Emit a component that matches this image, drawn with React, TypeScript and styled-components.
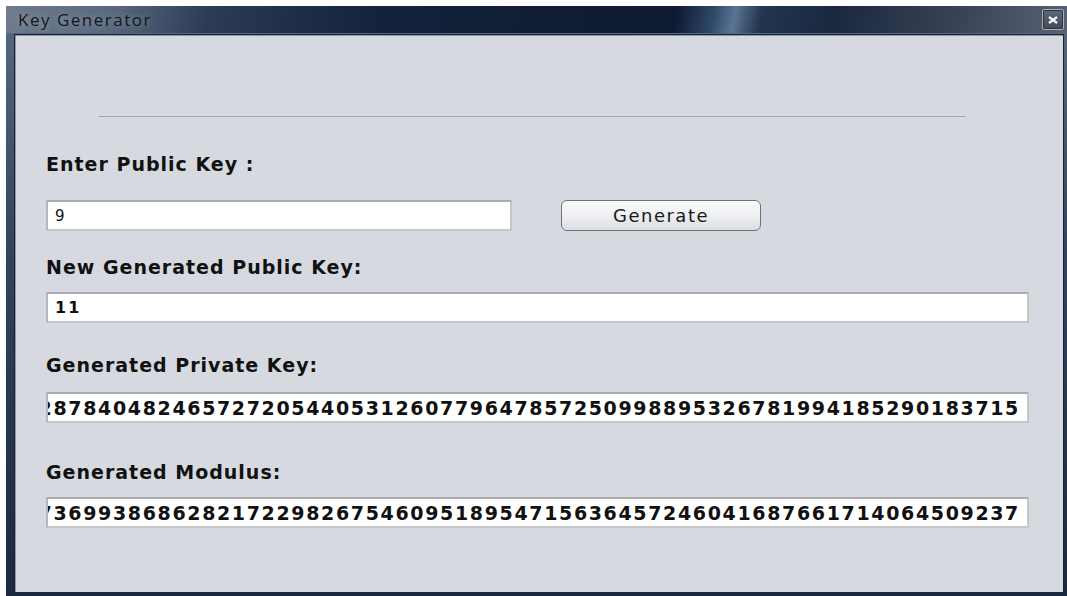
import { FunctionComponent } from "react"
import styled, { createGlobalStyle } from "styled-components"

const GlobalStyle = createGlobalStyle`
  html, body {
    margin: 0;
    padding: 0;
    background: #ffffff;
  }
  #root {
    width: 1067px;
    height: 596px;
    overflow: hidden;
  }
`

const StyledWindow = styled.div`
  box-sizing: border-box;
  width: 1061px;
  height: 590px;
  margin: 6px 0 0 6px;
  display: flex;
  flex-direction: column;
  background: linear-gradient(180deg, #5a6a80 0%, #34445e 40%, #1a2840 100%);
`

const StyledTitleBar = styled.div`
  height: 27px;
  flex: none;
  display: flex;
  align-items: center;
  justify-content: space-between;
  padding: 0 3px 0 12px;
  background: linear-gradient(
    100deg,
    #6e7c8e 0%,
    #5a697e 10%,
    #2c3c56 19%,
    #14223b 35%,
    #0d1a31 63%,
    #2f4868 66.5%,
    #5a7594 68.5%,
    #23354f 71%,
    #1a283f 78%,
    #3a4456 90%,
    #586273 100%
  );
`

const StyledTitle = styled.span`
  font-family: "Open Sans", "DejaVu Sans", sans-serif;
  font-size: 17px;
  letter-spacing: 1.5px;
  color: #15151c;
  text-shadow: 0 0 6px rgba(200, 210, 225, 0.5);
`

const StyledCloseButton = styled.div`
  box-sizing: border-box;
  width: 22px;
  height: 21px;
  display: flex;
  align-items: center;
  justify-content: center;
  border: 1px solid #a9b0ba;
  border-radius: 2px;
  background: linear-gradient(180deg, #5e6776 0%, #434b58 100%);
  box-shadow: inset 0 0 0 1px #2d3440;
`

const StyledBody = styled.div`
  flex: 1;
  display: flex;
  min-width: 0;
  padding: 1px 3px 3px 8px;
`

const StyledContent = styled.div`
  box-sizing: border-box;
  flex: 1;
  min-width: 0;
  display: flex;
  flex-direction: column;
  background: #d6d9e0;
  border: 1px solid #1c2434;
  box-shadow: inset 1px 1px 0 #8e97a6;
  padding: 0 34px 0 31px;
`

const StyledSeparator = styled.div`
  height: 1px;
  margin: 81px 63px 0 53px;
  background: #a3a6ad;
`

const StyledLabel = styled.div<{ $top: number }>`
  margin-top: ${(p) => p.$top}px;
  height: 20px;
  line-height: 20px;
  font-family: "DejaVu Sans", Verdana, sans-serif;
  font-weight: bold;
  font-size: 19px;
  letter-spacing: 1px;
  color: #111111;
  white-space: nowrap;
`

const StyledRow = styled.div<{ $top: number }>`
  margin-top: ${(p) => p.$top}px;
  display: flex;
  align-items: center;
  gap: 49px;
  min-width: 0;
`

const StyledField = styled.div<{ $width?: number; $size: number; $bold?: boolean; $spacing: number }>`
  box-sizing: border-box;
  flex: ${(p) => (p.$width ? `0 0 ${p.$width}px` : "1 1 0")};
  min-width: 0;
  height: 31px;
  display: flex;
  align-items: center;
  overflow: hidden;
  background: #ffffff;
  border: 2px solid #c4c6ca;
  border-top-color: #a9abb0;
  border-left-color: #b4b6ba;
  padding: 0 7px;
  font-family: "DejaVu Sans", Verdana, sans-serif;
  font-size: ${(p) => p.$size}px;
  font-weight: ${(p) => (p.$bold ? "bold" : "normal")};
  letter-spacing: ${(p) => p.$spacing}px;
  color: #111111;
  white-space: nowrap;
`

// long values are shown scrolled to their end, like a text field after input
const StyledScrolledField = styled(StyledField)`
  justify-content: flex-end;
  padding: 0 7px 0 0;
`

const StyledGenerateButton = styled.button`
  box-sizing: border-box;
  width: 200px;
  height: 31px;
  border: 1px solid #6f7379;
  border-radius: 6px;
  background: linear-gradient(180deg, #fbfbfb 0%, #eeeff1 50%, #dcdee2 100%);
  box-shadow: inset 0 1px 0 #ffffff;
  font-family: "DejaVu Sans", Verdana, sans-serif;
  font-size: 18px;
  letter-spacing: 1.5px;
  color: #1a1a1a;
  padding: 0;
`

interface InterfaceKeyGenerator {
  publicKey: string
  newPublicKey: string
  privateKey: string
  modulus: string
}

const KeyGenerator: FunctionComponent<InterfaceKeyGenerator> = ({
  publicKey,
  newPublicKey,
  privateKey,
  modulus,
}) => {
  return (
    <StyledWindow>
      <StyledTitleBar>
        <StyledTitle>Key Generator</StyledTitle>
        <StyledCloseButton>
          <svg width="10" height="8" viewBox="0 0 10 8">
            <path d="M1 1 L9 7 M9 1 L1 7" stroke="#f2f4f7" strokeWidth="2.2" />
          </svg>
        </StyledCloseButton>
      </StyledTitleBar>
      <StyledBody>
        <StyledContent>
          <StyledSeparator />
          <StyledLabel $top={37}>Enter Public Key :</StyledLabel>
          <StyledRow $top={26}>
            <StyledField $width={466} $size={15} $spacing={0.5}>
              {publicKey}
            </StyledField>
            <StyledGenerateButton type="button">Generate</StyledGenerateButton>
          </StyledRow>
          <StyledLabel $top={26}>New Generated Public Key:</StyledLabel>
          <StyledRow $top={15}>
            <StyledField $size={16} $bold $spacing={2}>
              {newPublicKey}
            </StyledField>
          </StyledRow>
          <StyledLabel $top={32}>Generated Private Key:</StyledLabel>
          <StyledRow $top={17}>
            <StyledScrolledField $size={19} $bold $spacing={1.65}>
              {privateKey}
            </StyledScrolledField>
          </StyledRow>
          <StyledLabel $top={39}>Generated Modulus:</StyledLabel>
          <StyledRow $top={15}>
            <StyledScrolledField $size={19} $bold $spacing={1.65}>
              {modulus}
            </StyledScrolledField>
          </StyledRow>
        </StyledContent>
      </StyledBody>
    </StyledWindow>
  )
}

const App: FunctionComponent = () => {
  return (
    <>
      <GlobalStyle />
      <KeyGenerator
        publicKey="9"
        newPublicKey="11"
        privateKey="41305915287840482465727205440531260779647857250998895326781994185290183715"
        modulus="10548736993868628217229826754609518954715636457246041687661714064509237"
      />
    </>
  )
}

export default App
